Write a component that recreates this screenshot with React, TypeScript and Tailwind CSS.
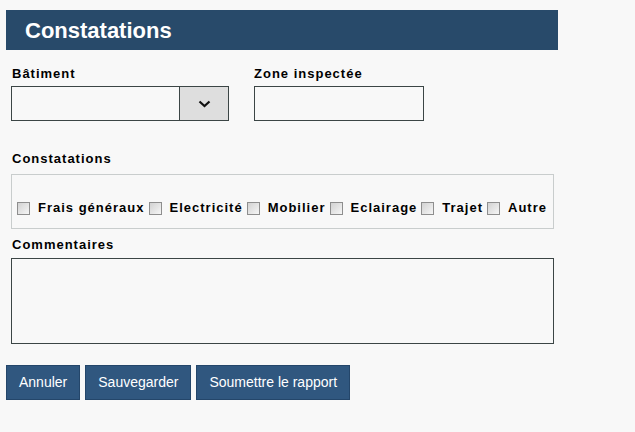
import React from 'react';

const items = ['Frais généraux', 'Electricité', 'Mobilier', 'Eclairage', 'Trajet', 'Autre'];

const Checkbox = () => (
  <span className="inline-block w-[13px] h-[13px] border border-[#8e8e8e] bg-gradient-to-br from-[#d2d2d2] to-[#f6f6f6] shrink-0" />
);

const Label = ({ children }: { children: React.ReactNode }) => (
  <div className="text-[13px] leading-[16px] font-bold tracking-[1px] text-black">{children}</div>
);

const App: React.FC = () => {
  return (
    <div className="w-[635px] h-[432px] bg-[#f8f8f8] overflow-hidden font-['Liberation_Sans',Arial,sans-serif] pt-[10px]">
      {/* Header */}
      <div className="ml-[6px] w-[552px] h-[40px] bg-[#284a6a] flex items-center pl-[19px]">
        <h1 className="text-[22px] font-bold text-white">Constatations</h1>
      </div>

      <div className="pl-[11px] pt-[16px]">
        {/* Top row */}
        <div className="flex gap-[25px]">
          <div>
            <div className="pl-[1px]">
              <Label>Bâtiment</Label>
            </div>
            <div className="mt-[4px] w-[218px] h-[35px] border border-[#3b4545] flex">
              <div className="flex-1" />
              <div className="w-[49px] h-full border-l border-[#3b4545] bg-[#dedede] flex items-center justify-center">
                <svg width="13" height="8" viewBox="0 0 13 8">
                  <polyline points="1.5,1.5 6.5,6 11.5,1.5" fill="none" stroke="#111" strokeWidth="2.2" />
                </svg>
              </div>
            </div>
          </div>
          <div>
            <Label>Zone inspectée</Label>
            <div className="mt-[4px] w-[170px] h-[35px] border border-[#3b4545]" />
          </div>
        </div>

        {/* Constatations */}
        <div className="mt-[30px] pl-[1px]">
          <Label>Constatations</Label>
        </div>
        <div className="mt-[7px] w-[543px] h-[55px] border border-[#c9cdcd] flex items-end pb-[12px] pl-[5px]">
          {items.map((item, i) => (
            <div key={item} className={`flex items-center ${i > 0 ? 'ml-[4px]' : ''}`}>
              <Checkbox />
              <span className="ml-[8px] text-[13px] leading-[16px] font-bold tracking-[1px] text-black">{item}</span>
            </div>
          ))}
        </div>

        {/* Commentaires */}
        <div className="mt-[8px] pl-[1px]">
          <Label>Commentaires</Label>
        </div>
        <div className="mt-[5px] w-[543px] h-[86px] border border-[#3b4545]" />
      </div>

      {/* Buttons */}
      <div className="ml-[6px] mt-[21px] flex gap-[5px]">
        {['Annuler', 'Sauvegarder', 'Soumettre le rapport'].map((b) => (
          <button
            key={b}
            className="h-[35px] px-[12px] bg-[#30577f] border border-[#24466a] text-white text-[14px]"
          >
            {b}
          </button>
        ))}
      </div>
    </div>
  );
};

export default App;
